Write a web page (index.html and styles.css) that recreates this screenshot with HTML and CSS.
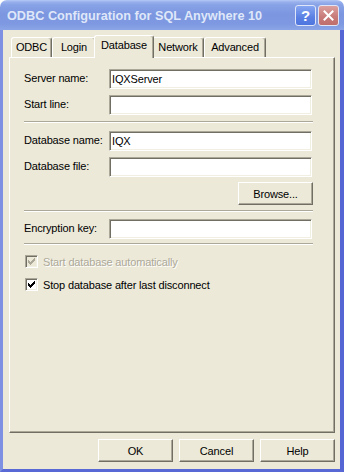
FILE: index.html
```html
<!DOCTYPE html>
<html>
<head>
<meta charset="utf-8">
<title>ODBC Configuration for SQL Anywhere 10</title>
<link rel="stylesheet" href="styles.css">
</head>
<body>
<div class="window">
  <div class="titlebar">
    <span class="title">ODBC Configuration for SQL Anywhere 10</span>
    <div class="caption-btns">
      <span class="cbtn help">?</span>
      <span class="cbtn close">
        <svg width="11" height="11" viewBox="0 0 11 11"><path d="M1.5 1.5L9.5 9.5M9.5 1.5L1.5 9.5" stroke="#fff" stroke-width="2" stroke-linecap="square" fill="none"/></svg>
      </span>
    </div>
  </div>
  <div class="client">
    <div class="tabs">
      <div class="tab tab-odbc">ODBC</div>
      <div class="tab tab-login">Login</div>
      <div class="tab tab-db selected">Database</div>
      <div class="tab tab-net">Network</div>
      <div class="tab tab-adv">Advanced</div>
    </div>
    <div class="panel">
      <div class="row">
        <span class="label">Server name:</span>
        <input class="edit" type="text" value="IQXServer">
      </div>
      <div class="row gap6">
        <span class="label">Start line:</span>
        <input class="edit" type="text" value="">
      </div>
      <div class="sep gap6"></div>
      <div class="row gap8">
        <span class="label">Database name:</span>
        <input class="edit" type="text" value="IQX">
      </div>
      <div class="row gap6">
        <span class="label">Database file:</span>
        <input class="edit" type="text" value="">
      </div>
      <div class="btn browse gap5">Browse...</div>
      <div class="sep gap5"></div>
      <div class="row gap7">
        <span class="label">Encryption key:</span>
        <input class="edit" type="text" value="">
      </div>
      <div class="sep gap4"></div>
      <div class="check-row disabled gap10">
        <span class="checkbox">
          <svg width="7" height="7" viewBox="0 0 7 7"><path d="M6 0h1v1h-1zM5 1h2v1h-2zM0 2h1v1h-1zM4 2h3v1h-3zM0 3h2v1h-2zM3 3h3v1h-3zM0 4h5v1h-5zM1 5h3v1h-3zM2 6h1v1h-1z"/></svg>
        </span>
        <span class="check-label">Start database automatically</span>
      </div>
      <div class="check-row gap10">
        <span class="checkbox">
          <svg width="7" height="7" viewBox="0 0 7 7"><path d="M6 0h1v1h-1zM5 1h2v1h-2zM0 2h1v1h-1zM4 2h3v1h-3zM0 3h2v1h-2zM3 3h3v1h-3zM0 4h5v1h-5zM1 5h3v1h-3zM2 6h1v1h-1z"/></svg>
        </span>
        <span class="check-label">Stop database after last disconnect</span>
      </div>
    </div>
    <div class="footer">
      <div class="btn">OK</div>
      <div class="btn">Cancel</div>
      <div class="btn">Help</div>
    </div>
  </div>
</div>
</body>
</html>
```
FILE: styles.css
```css
* { box-sizing: border-box; }
html, body { margin: 0; padding: 0; }
body {
  width: 344px;
  height: 472px;
  overflow: hidden;
  background: #ffffff;
  font-family: "Liberation Sans", Arial, sans-serif;
  font-size: 11px;
  letter-spacing: -0.15px;
  color: #000;
}
.window {
  width: 344px;
  height: 472px;
  display: flex;
  flex-direction: column;
}
.titlebar {
  flex: none;
  height: 30px;
  display: flex;
  align-items: center;
  padding: 1px 5px 0 7px;
  border-radius: 7px 7px 0 0;
  background: linear-gradient(to bottom, #b4c8f4 0px, #98b1ec 2px, #87a2e6 5px, #7c97e0 14px, #7e99e1 24px, #8ba5e7 30px);
}
.title {
  flex: 1;
  font-weight: bold;
  font-size: 12.7px;
  letter-spacing: 0;
  color: #dfe7f9;
}
.caption-btns {
  display: flex;
  gap: 2px;
}
.cbtn {
  width: 21px;
  height: 21px;
  border-radius: 3px;
  border: 1px solid #dfe6f8;
  display: flex;
  align-items: center;
  justify-content: center;
}
.help {
  background: linear-gradient(to bottom, #86a6f1, #5a80e4 60%, #4f76df);
  color: #fff;
  font-weight: bold;
  font-size: 15px;
  letter-spacing: 0;
}
.close {
  background: linear-gradient(to bottom, #dba09e, #c77a78 60%, #bf6e6c);
}
.client {
  flex: 1;
  display: flex;
  flex-direction: column;
  background: #ece9d8;
  border-style: solid;
  border-width: 0 4px 3px 3px;
  border-color: #7e90e2 #5566d4 #5868d5 #7e90e2;
  padding: 5px 5px 7px 6px;
}
.tabs {
  display: flex;
  align-items: flex-end;
  height: 22px;
  padding-left: 2px;
}
.tab {
  height: 20px;
  border: 1px solid #fff;
  border-bottom: none;
  border-right-color: #716f64;
  border-radius: 3px 3px 0 0;
  box-shadow: inset -1px 0 #aca899;
  background: #ece9d8;
  display: flex;
  align-items: center;
  justify-content: center;
  padding-bottom: 1px;
}
.tab-odbc { width: 41px; }
.tab-login { width: 44px; }
.tab-db { width: 60px; }
.tab-net { width: 52px; }
.tab-adv { width: 62px; }
.tab.selected {
  height: 23px;
  margin: 0 -2px -1px;
  position: relative;
  z-index: 1;
  padding-bottom: 4px;
}
.panel {
  height: 376px;
  border: 1px solid;
  border-color: #fff #716f64 #716f64 #fff;
  box-shadow: inset -1px -1px #aca899;
  padding: 11px 21px 0 14px;
  display: flex;
  flex-direction: column;
}
.row {
  display: flex;
  align-items: flex-start;
}
.label {
  width: 85px;
  flex: none;
  padding-top: 3px;
  line-height: 13px;
}
.edit {
  width: 203px;
  height: 20px;
  margin: 0;
  padding: 0 2px;
  border: 1px solid;
  border-color: #aca899 #fff #fff #aca899;
  box-shadow: inset 1px 1px #716f64, inset -1px -1px #f1efe2;
  background: #fff;
  font-family: "Liberation Sans", Arial, sans-serif;
  font-size: 11px;
  letter-spacing: -0.15px;
  color: #000;
  outline: none;
}
.sep {
  height: 2px;
  border-top: 1px solid #aca899;
  border-bottom: 1px solid #fff;
}
.btn {
  width: 75px;
  height: 23px;
  border: 1px solid;
  border-color: #fff #716f64 #716f64 #fff;
  box-shadow: inset -1px -1px #aca899;
  background: #ece9d8;
  display: flex;
  align-items: center;
  justify-content: center;
}
.browse { align-self: flex-end; }
.check-row {
  display: flex;
  align-items: center;
  gap: 5px;
  margin-left: 1px;
}
.checkbox {
  width: 13px;
  height: 13px;
  flex: none;
  border: 1px solid;
  border-color: #aca899 #fff #fff #aca899;
  box-shadow: inset 1px 1px #716f64, inset -1px -1px #f1efe2;
  background: #fff;
  display: flex;
  align-items: center;
  justify-content: center;
}
.checkbox svg { fill: #000; }
.disabled .checkbox { background: #ece9d8; }
.disabled .checkbox svg { fill: #aca899; }
.disabled .check-label {
  color: #aca899;
  text-shadow: 1px 1px 0 #fff;
}
.gap4 { margin-top: 4px; }
.gap5 { margin-top: 5px; }
.gap6 { margin-top: 6px; }
.gap7 { margin-top: 7px; }
.gap8 { margin-top: 8px; }
.gap10 { margin-top: 10px; }
.footer {
  display: flex;
  justify-content: flex-end;
  gap: 6px;
  margin-top: 6px;
}
```
